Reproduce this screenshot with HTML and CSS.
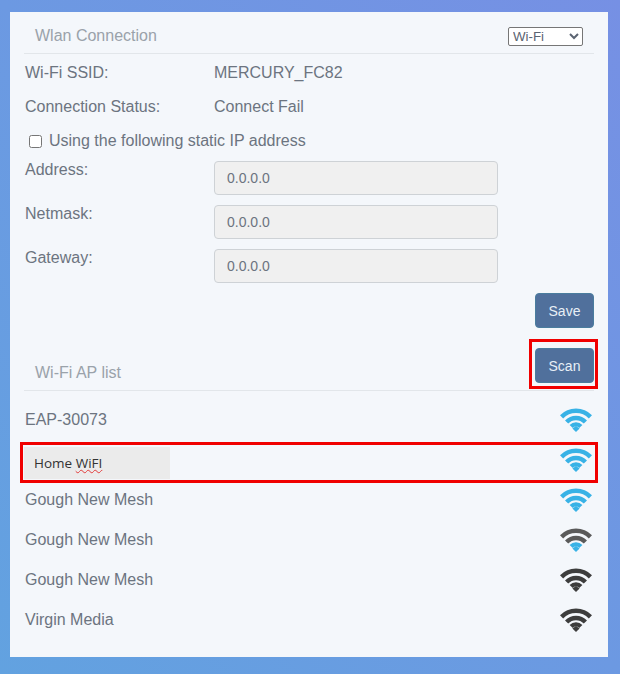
FILE: index.html
```html
<!DOCTYPE html>
<html lang="en">
<head>
    <meta charset="UTF-8">
    <meta name="viewport" content="width=device-width, initial-scale=1.0">
    <title>Wlan Connection</title>
    <link rel="stylesheet" href="styles.css">
</head>
<body>
    <svg class="icon-defs" width="0" height="0" aria-hidden="true">
        <symbol id="arc-outer" viewBox="0 0 32 24"><path d="M1.6 8.9A20 20 0 0 1 30.4 8.9" /></symbol>
        <symbol id="arc-middle" viewBox="0 0 32 24"><path d="M6.6 14A13 13 0 0 1 25.4 14" /></symbol>
        <symbol id="arc-inner" viewBox="0 0 32 24"><path d="M11.2 18.4A6.6 6.6 0 0 1 20.8 18.4" /></symbol>
    </svg>

    <div class="panel">
        <div class="section-head wlan-head">
            <div class="section-title">Wlan Connection</div>
            <select class="mode-select">
                <option>Wi-Fi</option>
            </select>
        </div>

        <div class="info-row ssid-row">
            <div class="info-label">Wi-Fi SSID:</div>
            <div>MERCURY_FC82</div>
        </div>
        <div class="info-row status-row">
            <div class="info-label">Connection Status:</div>
            <div>Connect Fail</div>
        </div>

        <label class="static-check">
            <input type="checkbox">
            <span>Using the following static IP address</span>
        </label>

        <div class="field-row">
            <div class="info-label">Address:</div>
            <input class="ip-input" type="text" value="0.0.0.0" disabled>
        </div>
        <div class="field-row">
            <div class="info-label">Netmask:</div>
            <input class="ip-input" type="text" value="0.0.0.0" disabled>
        </div>
        <div class="field-row">
            <div class="info-label">Gateway:</div>
            <input class="ip-input" type="text" value="0.0.0.0" disabled>
        </div>

        <div class="save-row">
            <button class="action-btn">Save</button>
        </div>

        <div class="section-head ap-head">
            <div class="section-title">Wi-Fi AP list</div>
            <div class="scan-wrap">
                <button class="action-btn">Scan</button>
                <div class="scan-mark"></div>
            </div>
        </div>

        <div class="ap-list">
            <div class="ap-row">
                <div class="ap-name">EAP-30073</div>
                <span class="wifi">
                    <svg viewBox="0 0 32 24"><use href="#arc-outer" class="on" /><use href="#arc-middle" class="on" /><use href="#arc-inner" class="on" /><polygon class="dot-on" points="12.4,20.6 16,18 19.6,20.6 16,24" /></svg>
                </span>
            </div>
            <div class="ap-row home-row">
                <div class="home-patch">Home <span class="typo">WiFI</span></div>
                <span class="wifi">
                    <svg viewBox="0 0 32 24"><use href="#arc-outer" class="on" /><use href="#arc-middle" class="on" /><use href="#arc-inner" class="on" /><polygon class="dot-on" points="12.4,20.6 16,18 19.6,20.6 16,24" /></svg>
                </span>
                <div class="home-mark"></div>
            </div>
            <div class="ap-row">
                <div class="ap-name">Gough New Mesh</div>
                <span class="wifi">
                    <svg viewBox="0 0 32 24"><use href="#arc-outer" class="on" /><use href="#arc-middle" class="on" /><use href="#arc-inner" class="on" /><polygon class="dot-on" points="12.4,20.6 16,18 19.6,20.6 16,24" /></svg>
                </span>
            </div>
            <div class="ap-row">
                <div class="ap-name">Gough New Mesh</div>
                <span class="wifi">
                    <svg viewBox="0 0 32 24"><use href="#arc-outer" class="weak" /><use href="#arc-middle" class="weak" /><use href="#arc-inner" class="on" /><polygon class="dot-on" points="12.4,20.6 16,18 19.6,20.6 16,24" /></svg>
                </span>
            </div>
            <div class="ap-row">
                <div class="ap-name">Gough New Mesh</div>
                <span class="wifi">
                    <svg viewBox="0 0 32 24"><use href="#arc-outer" class="off" /><use href="#arc-middle" class="off" /><use href="#arc-inner" class="off" /><polygon class="dot-off" points="12.4,20.6 16,18 19.6,20.6 16,24" /></svg>
                </span>
            </div>
            <div class="ap-row">
                <div class="ap-name">Virgin Media</div>
                <span class="wifi">
                    <svg viewBox="0 0 32 24"><use href="#arc-outer" class="off" /><use href="#arc-middle" class="off" /><use href="#arc-inner" class="off" /><polygon class="dot-off" points="12.4,20.6 16,18 19.6,20.6 16,24" /></svg>
                </span>
            </div>
        </div>
    </div>
</body>
</html>
```

FILE: styles.css
```css
* {
    box-sizing: border-box;
}

html, body {
    margin: 0;
    height: 674px;
    overflow: hidden;
}

body {
    font-family: 'Liberation Sans', Arial, sans-serif;
    font-size: 16px;
    color: #6c7480;
    background: linear-gradient(to bottom left, #7690e4 0%, #62a2e0 100%);
    padding: 12px 12px 17px 10px;
}

.icon-defs {
    position: absolute;
}

.icon-defs path {
    fill: none;
    stroke-width: 4.4;
}

.panel {
    background: #f4f7fb;
    height: 100%;
    padding: 0 14px;
}

.section-head {
    display: flex;
    justify-content: space-between;
    border-bottom: 1px solid #e2e6ea;
}

.section-title {
    color: #9aa2aa;
    padding-left: 11px;
}

.wlan-head {
    height: 42px;
    align-items: flex-start;
    padding-top: 15px;
    padding-right: 11px;
}

.mode-select {
    width: 75px;
    height: 19px;
    font-family: 'Liberation Sans', Arial, sans-serif;
    font-size: 13.33px;
    color: #5b6472;
    background: #fff;
    border: 1px solid #767676;
    border-radius: 2px;
    padding: 0;
}

.info-row {
    display: flex;
    align-items: center;
    height: 34px;
}

.ssid-row {
    margin-top: 2px;
}

.info-label {
    width: 190px;
    flex-shrink: 0;
    padding-left: 1px;
}

.static-check {
    display: flex;
    align-items: center;
    gap: 7px;
    height: 20px;
    margin: 7px 0 0 5px;
}

.static-check input {
    width: 13px;
    height: 13px;
    margin: 0;
}

.field-row {
    display: flex;
    height: 34px;
    margin-bottom: 10px;
}

.static-check + .field-row {
    margin-top: 10px;
}

.field-row .info-label {
    padding-top: 1px;
    line-height: 16px;
}

.ip-input {
    width: 284px;
    height: 34px;
    padding: 0 12px;
    font-family: 'Liberation Sans', Arial, sans-serif;
    font-size: 14px;
    color: #6c7480;
    -webkit-text-fill-color: #6c7480;
    opacity: 1;
    background: #f0f0f0;
    border: 1px solid #ced2d6;
    border-radius: 4px;
}

.save-row {
    display: flex;
    justify-content: flex-end;
}

.action-btn {
    width: 59px;
    height: 35px;
    padding: 0;
    font-family: 'Liberation Sans', Arial, sans-serif;
    font-size: 14px;
    color: #e8eff6;
    background: #50709c;
    border: 1px solid #4a7d9e;
    border-radius: 4px;
}

.ap-head {
    height: 43px;
    margin-top: 20px;
    align-items: flex-start;
}

.ap-head .section-title {
    padding-top: 16px;
}

.scan-wrap {
    position: relative;
    height: 35px;
}

.scan-mark {
    position: absolute;
    left: -6px;
    right: -4px;
    top: -9px;
    bottom: -6px;
    border: 3.5px solid #f00000;
}

.ap-list {
    padding-top: 9px;
}

.ap-row {
    position: relative;
    display: flex;
    justify-content: space-between;
    align-items: center;
    height: 40px;
}

.ap-name {
    padding-left: 1px;
}

.home-row {
    align-items: flex-end;
}

.home-patch {
    width: 146px;
    height: 32px;
    margin-bottom: 1px;
    padding-left: 10px;
    font-family: 'Open Sans', sans-serif;
    font-size: 13.5px;
    line-height: 32px;
    color: #333;
    background: #ebebeb;
}

.typo {
    text-decoration: underline wavy #e23b3b 1px;
}

.home-mark {
    position: absolute;
    left: -4px;
    right: -4px;
    top: 2px;
    height: 41px;
    border: 3.5px solid #f00000;
}

.wifi {
    display: block;
    width: 32px;
    height: 24px;
    margin-right: 2px;
}

.home-row .wifi {
    align-self: center;
}

.wifi svg {
    display: block;
    width: 32px;
    height: 24px;
}

.on {
    stroke: #38b2e6;
}

.weak {
    stroke: #5a5a5a;
}

.off {
    stroke: #3d3d3d;
}

.dot-on {
    fill: #38b2e6;
}

.dot-off {
    fill: #3d3d3d;
}
```
